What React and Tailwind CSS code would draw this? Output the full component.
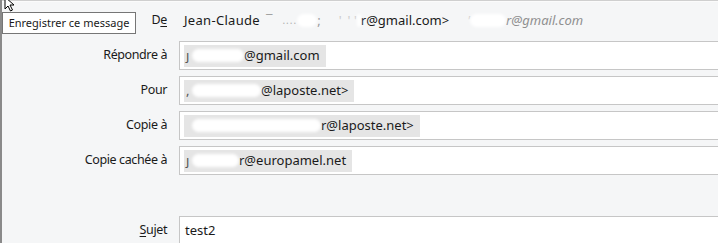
import React from 'react';

const FONT = { fontFamily: '"Noto Sans", "Open Sans", sans-serif' };

function Blur({ w, className = '' }) {
  return <span className={`inline-block h-[13px] rounded-full bg-white blur-[1.5px] ${className}`} style={{ width: w }} />;
}

function Chip({ lead, blurW, text }) {
  return (
    <span className="flex h-[22px] items-center bg-[#e5e5e5] pl-[2px] pr-[6px] text-[13px] text-[#1a1a1a]">
      <span className="w-[6px] text-[#555]">{lead}</span>
      <Blur w={blurW} />
      <span>{text}</span>
    </span>
  );
}

function Label({ children }) {
  return (
    <div className="flex h-[29px] items-center justify-end text-[12.5px] tracking-[-0.4px] text-[#1a1a1a]">{children}</div>
  );
}

function Field({ label, children }) {
  return (
    <>
      <Label>{label}</Label>
      <div className="-mr-2 flex h-[29px] items-center border border-[#c6c6c6] bg-white pl-[4px]">{children}</div>
    </>
  );
}

export default function App() {
  return (
    <div className="relative h-[243px] w-[718px] overflow-hidden border-l-2 border-[#8a8a8a] bg-[#f5f6f7]" style={FONT}>
      <div className="h-[2px] border-t border-[#cfcfcf] bg-[#fbfbfb]" />
      <div className="grid grid-cols-[165px_1fr] gap-x-3 gap-y-[6px] pt-[4px]">
        <Label>
          <span>
            D<span className="underline underline-offset-2">e</span>
          </span>
        </Label>
        <div className="flex h-[29px] items-center whitespace-nowrap pl-[5px] text-[13px] text-[#1a1a1a]">
          <span className="tracking-[0.3px]">Jean-Claude</span>
          <span className="ml-[6px] text-[#9a9a9a]">¯</span>
          <span className="ml-[10px] text-[10px] tracking-[1px] text-[#b0b0b0]">....</span>
          <Blur w={20} />
          <span className="text-[#999]">;</span>
          <span className="ml-[18px] text-[#ccc]">'</span>
          <span className="ml-[6px] text-[#ccc]">' '</span>
          <Blur w={4} />
          <span>r@gmail.com&gt;</span>
          <span className="ml-[18px] italic text-[#d0d0d0]">'</span>
          <Blur w={36} />
          <span className="italic text-[#8f8f8f]">r@gmail.com</span>
        </div>

        <Field label="Répondre à">
          <Chip lead="ȷ" blurW={52} text="@gmail.com" />
        </Field>
        <Field label="Pour">
          <Chip lead="," blurW={69} text="@laposte.net>" />
        </Field>
        <Field label="Copie à">
          <Chip lead="" blurW={129} text="r@laposte.net>" />
        </Field>
        <Field label="Copie cachée à">
          <Chip lead="ȷ" blurW={47} text="r@europamel.net" />
        </Field>

        <div className="col-span-2 h-[29px]" />

        <Field
          label={
            <span>
              <span className="underline underline-offset-2">S</span>ujet
            </span>
          }
        >
          <span className="pl-[1px] text-[13px] text-[#1a1a1a]">test2</span>
        </Field>
      </div>

      <div className="absolute left-0 top-[12px] flex h-[22px] w-[134px] items-center justify-center border border-[#767676] bg-white text-[11px] text-[#1a1a1a]">
        Enregistrer ce message
      </div>

      <svg className="absolute left-[2px] top-[-4px]" width="14" height="16" viewBox="0 0 14 16">
        <path d="M1 1 L1 13 L4 10 L6.5 15 L8.5 14 L6 9 L10 9 Z" fill="#fff" stroke="#000" strokeWidth="1" />
      </svg>
    </div>
  );
}
